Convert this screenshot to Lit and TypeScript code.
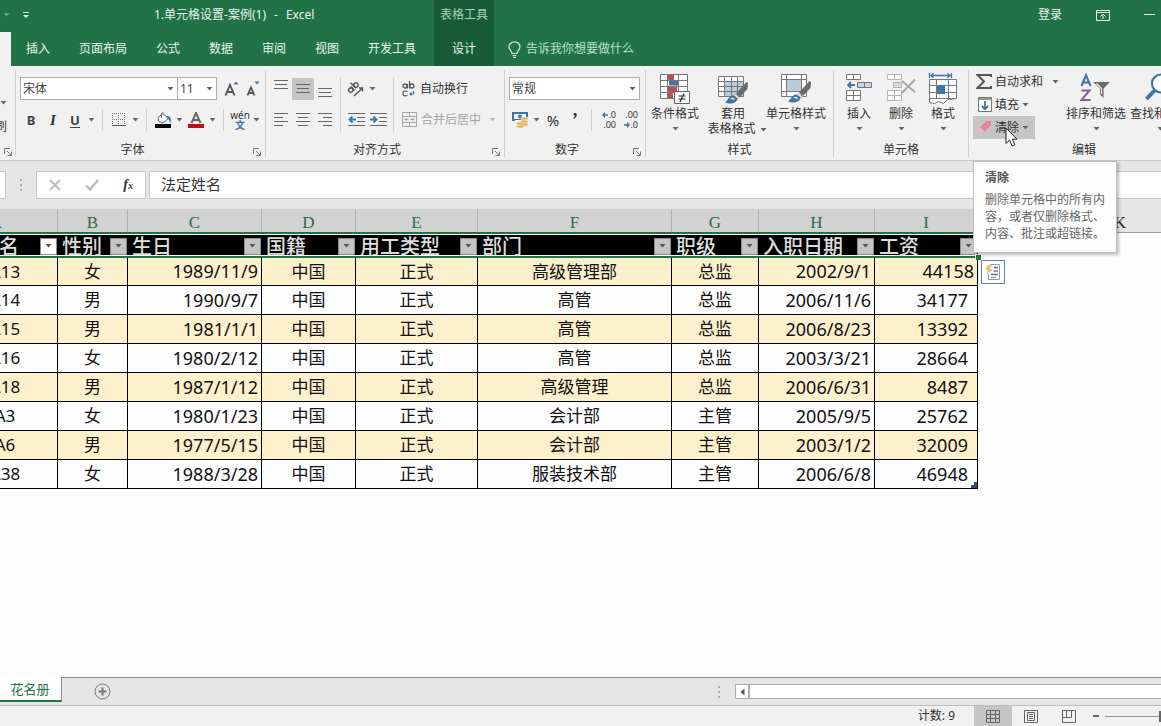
import { LitElement, html, css, svg, nothing, TemplateResult } from "lit";
import { customElement, property, state } from "lit/decorators.js";
import { classMap } from "lit/directives/class-map.js";

const UI_FONT = css`"Noto Sans", "Noto Sans CJK SC", sans-serif`;

const icon = (w: number, h: number, body: unknown) => html`<svg
  width=${w}
  height=${h}
  viewBox="0 0 ${w} ${h}"
  fill="none"
  stroke-width="1"
  aria-hidden="true"
>${body}</svg>`;

const caret = (color = "#666") =>
  icon(7, 4, svg`<path d="M0.5 0h6L3.5 3.5z" fill=${color} />`);

const lines = (rows: Array<[number, number, number]>, h = 16) =>
  icon(16, h, svg`<path stroke="#666" d=${rows.map(([x, y, w]) => `M${x} ${y}.5h${w}`).join("")} />`);

const brush = (x: number, y: number) => svg`<g transform="translate(${x} ${y})">
  <path d="M21.500 0L23 1l-.5 6L15 15l-4-3.500z" fill="#6b6b6b" />
  <path d="M10.500 12l4 3.500-1.500 1.500-4-3.500z" fill="#e8e8e8" stroke="#8a8a8a" stroke-width=".5" />
  <path d="M8.500 13.500c-4-.5-5 4-8.500 7 5 2 12 1 12.500-4z" fill="#3f74a3" />
  <path d="M6 17c1-1 3-.5 3 1" stroke="#dbe9f4" stroke-width="1.500" /></g>`;

const icons = {
  qat: icon(8, 8, svg`<path d="M1 1.500h6" stroke="#e4f2ea" /><path d="M1 4h6L4 7z" fill="#e4f2ea" />`),
  ribbonOptions: icon(14, 12, svg`<path stroke="#e4f2ea" d="M.5 1.500h13v10h-13zM.5 3.500h13M7 10V5M4.500 7.500L7 5l2.500 2.500" />`),
  minimize: icon(11, 2, svg`<path stroke="#e4f2ea" d="M0 .5h11" />`),
  bulb: icon(13, 17, svg`<path stroke="#d5eadd" stroke-width="1.200" d="M4 12.500C4 10 1 9 1 5.800a5.500 5 0 0 1 11 0C12 9 9 10 9 12.500zM4.500 14.500h4M5 16.300h3" />`),
  launcher: icon(8, 8, svg`<path stroke="#777" d="M.5 6V.5H6M3 3l4 4M7.500 3.500v4h-4" />`),
  grow: icon(15, 16, svg`<path stroke="#555" stroke-width="1.900" d="M1.500 14.500L6 4L10.500 14.500M3 11h6" /><path fill="#3f74a3" d="M9.500 3.500L12 .5l2.500 3z" />`),
  shrink: icon(14, 16, svg`<path stroke="#555" stroke-width="1.800" d="M1.500 14.500L5 6.500L8.500 14.500M2.700 12h4.600" /><path fill="#3f74a3" d="M8.500 .5h5L11 3.500z" />`),
  borders: icon(14, 14, svg`<path stroke="#777" stroke-dasharray="1 1" d="M0 .5h13M0 6.500h13M.5 0v13M6.500 0v13M12.500 0v13" /><path stroke="#555" d="M0 12.500h14" />`),
  bucket: icon(17, 16, svg`<path stroke="#666" d="M3 5.500L8 1.500l5.500 5L8 11 3.500 9zM6.500 6V1.500Q7 .3 8 1" fill="#fff" /><path fill="#3f74a3" d="M12 4c3 0 5 2 3.500 7-1-2-1-3.500-3.500-5z" /><path fill="#000" d="M0 12h16v4H0z" />`),
  fontColor: icon(16, 16, svg`<path stroke="#666" stroke-width="2" d="M3.500 11L8 1L12.500 11M5.300 8h5.500" /><path fill="#c00d16" d="M0 12h16v4H0z" />`),
  orient: icon(18, 16, svg`<g stroke="#555" stroke-width="1.400"><g transform="rotate(-45 7 8)"><circle cx="4" cy="6.500" r="2.200" /><path d="M6.500 4v5.200M9 1v8" /><circle cx="11.200" cy="6.500" r="2.200" /></g><path d="M7 15L15.500 7M12 7h3.500v3.500" /></g>`),
  outdent: icon(17, 13, svg`<path stroke="#666" d="M0 .5h17M9 4.500h8M9 8.500h8M0 12.500h17" /><path stroke="#3f74a3" stroke-width="1.800" d="M8 6.500H1.500M4.500 3.500l-3 3 3 3" />`),
  indent: icon(17, 13, svg`<path stroke="#666" d="M0 .5h17M9 4.500h8M9 8.500h8M0 12.500h17" /><path stroke="#3f74a3" stroke-width="1.800" d="M0 6.500h6.500M3.500 3.500l3 3-3 3" />`),
  wrap: icon(14, 16, svg`<g stroke="#555" stroke-width="1.300"><circle cx="3" cy="5" r="2" /><path d="M5.300 3v4.500M7.500 0v7.500M5.500 10.500Q1 9 1 12.500t4.500 2" /><circle cx="9.800" cy="5" r="2" /></g><path stroke="#3f74a3" stroke-width="1.200" d="M11.500 10v3H8M9.500 11.500L8 13l1.500 1.500" />`),
  merge: icon(15, 15, svg`<path stroke="#a5a5a5" d="M.5 .5h14v14H.5zM.5 4.500h14M.5 10.500h14M7.500 .5v4M7.500 10.500v4M3 7.500h3.500M12 7.500H8.500M4.500 6L3 7.500 4.500 9M10.500 6l1.500 1.500L10.500 9" />`),
  currency: icon(17, 16, svg`<path fill="#3f74a3" d="M0 0h16v9H0z" /><path fill="#f5f5f5" d="M2 2h12v5H2z" /><circle cx="8" cy="4.500" r="2" fill="#3f74a3" /><path fill="#f1f1f1" d="M9 5h8v11H3V8h6z" /><g fill="#e3b65c"><ellipse cx="12.500" cy="6.500" rx="3.500" ry="1.300" /><ellipse cx="12.500" cy="9.500" rx="3.500" ry="1.300" /><ellipse cx="12.500" cy="12.500" rx="3.500" ry="1.300" /><ellipse cx="7.500" cy="11.500" rx="3" ry="1.200" /><ellipse cx="8" cy="14.500" rx="3.500" ry="1.300" /></g>`),
  arrowLeft: icon(6, 6, svg`<path stroke="#3f74a3" stroke-width="1.300" d="M6 3H1M3 .7L.8 3 3 5.300" />`),
  arrowRight: icon(6, 6, svg`<path stroke="#3f74a3" stroke-width="1.300" d="M0 3h5M3 .7L5.200 3 3 5.300" />`),
  conditional: icon(32, 32, svg`<path fill="#fff" d="M1.500 1.500h27v24h-27z" /><path fill="#c0504d" d="M9 2h6v5H9zM9 13h9v6H9zM9 19h5v6H9z" /><path fill="#3f74a3" d="M10 7.500h10v5H10z" /><path stroke="#777" d="M1.500 1.500h27v24h-27zM1.500 7.500h27M1.500 13.500h27M1.500 19.500h27M8.500 1.500v24M19.500 1.500v24" /><path fill="#fff" stroke="#666" d="M15.500 18.500h15v12h-15z" /><path stroke="#333" stroke-width="1.200" d="M19.500 23h7M19.500 26h7M25 20.500L21 29" />`),
  tableFormat: icon(32, 32, svg`<path fill="#fff" d="M1.500 3.500h25v20h-25z" /><path fill="#b9cbdc" d="M8 9h18v14H8z" /><path stroke="#777" d="M1.500 3.500h25v20h-25zM1.500 8.500h25M1.500 13.500h25M1.500 18.500h25M7.500 3.500v20M14.500 3.500v20M20.500 3.500v20" />${brush(8, 9)}`),
  cellStyle: icon(32, 32, svg`<path fill="#fff" d="M1.500 1.500h25v22h-25z" /><path fill="#b9cbdc" d="M7 7h14v11H7z" /><path stroke="#777" d="M1.500 1.500h25v22h-25zM1.500 6.500h25M1.500 18.500h25M6.500 1.500v22M21.500 1.500v22" />${brush(8, 8)}`),
  insert: icon(28, 32, svg`<path fill="#fff" stroke="#777" d="M1.500 1.500h14v5h-14zM8.500 1.500v5M1.500 17.500h14v10h-14zM1.500 22.500h14M8.500 17.500v10" /><path fill="#c3d3e2" stroke="#777" d="M12.500 9.500h14v5h-14zM19.500 9.500v5" /><path stroke="#3f74a3" stroke-width="1.800" d="M10 12H3M6 9l-3 3 3 3" />`),
  remove: icon(32, 32, svg`<path fill="#fff" stroke="#b5b5b5" d="M2.500 1.500h14v5h-14zM9.500 1.500v5M2.500 17.500h14v10h-14zM2.500 22.500h14M9.500 17.500v10" /><path fill="#d8d8d8" stroke="#b5b5b5" d="M8.500 9.500h8v5h-8z" /><path stroke="#a8a8a8" stroke-width="2" d="M17 8l13 11M30 6.500L17 20" />`),
  format: icon(30, 32, svg`<path stroke="#3f74a3" stroke-width="1.300" d="M1.500 0v5M23.500 0v5M3 2.500h19M5.500 .3L3 2.500l2.500 2.200M19.500 .3L22 2.500l-2.500 2.200" /><path fill="#fff" stroke="#777" d="M1.500 6.500h27v19l-9 1-4 4-5-2-4 2-5-1z" /><path stroke="#777" d="M1.500 12.500h27M1.500 19.500h27M1.500 25.500h27M8.500 6.500v19M20.500 6.500v19" /><path fill="#3f74a3" d="M9 12h8v9H9z" />`),
  sum: icon(16, 15, svg`<path stroke="#555" stroke-width="2" d="M15 3V1H1.500L8 7.500 1.500 14H15v-2" />`),
  fill: icon(14, 15, svg`<path fill="#fff" stroke="#777" d="M.5 .5h13v14H.5z" /><path fill="#999" d="M1 1h12v2H1z" /><path stroke="#3f74a3" stroke-width="1.800" d="M7 4v8M3.800 9L7 12.200 10.200 9" />`),
  eraser: icon(14, 13, svg`<path fill="#e6859b" d="M8.500 0h4.500v4.500l-6.500 6-4.500-4.500z" /><path fill="#f3b6c2" d="M1.800 6.500l4.200 4.300L4.500 12H1.500L0 10V8z" />`),
  sort: icon(32, 32, svg`<path stroke="#3f74a3" stroke-width="2" d="M1.500 13L6 2l4.500 11M3.200 9.500h5.800" /><path stroke="#8a5aa0" stroke-width="2" d="M1.500 17.500h8L1.500 27h9" /><path fill="#6b6b6b" d="M13 9h17l-6.500 6.500V25L20 21.500v-6z" /><path stroke="#eee" stroke-width="1.200" d="M16.500 10.500l5 5v5.500" />`),
  find: icon(32, 32, svg`<circle cx="17" cy="10.500" r="9" stroke="#3f74a3" stroke-width="2.200" fill="#fff" /><path stroke="#3f74a3" stroke-width="4" d="M10.500 17.500L2.500 26" />`),
  cross: icon(12, 12, svg`<path stroke="#bbb" stroke-width="1.800" d="M1 1l10 10M11 1L1 11" />`),
  check: icon(14, 12, svg`<path stroke="#bbb" stroke-width="2.400" d="M1 6.500l4 4L13 1" />`),
  dots: icon(3, 12, svg`<path fill="#aaa" d="M0 0h2v2H0zM0 5h2v2H0zM0 10h2v2H0z" />`),
  plus: icon(17, 17, svg`<circle cx="8.500" cy="8.500" r="7.500" stroke="#777" /><path stroke="#777" stroke-width="2" d="M8.500 4.500v8M4.500 8.500h8" />`),
  scrollLeft: icon(5, 8, svg`<path fill="#555" d="M4.500 .5v7L.5 4z" />`),
  normalView: icon(14, 13, svg`<path stroke="#666" d="M.5 .5h13v12H.5zM.5 4.500h13M.5 8.500h13M4.500 .5v12M9.500 .5v12" />`),
  pageView: icon(14, 13, svg`<path stroke="#666" d="M.5 .5h13v12H.5zM3.500 2.500h7v8h-7zM5 4.500h4M5 6.500h4M5 8.500h4" />`),
  breakView: icon(14, 13, svg`<path stroke="#666" d="M.5 .5h13v12H.5zM4.500 .5v7M9.500 .5v7M.5 7.500h9" />`),
  tag: icon(18, 18, svg`<path fill="#fff" stroke="#999" d="M6.500 3.500V1.500h9v15h-11V11" /><path fill="#e8c07e" d="M4 2h4L6 6h3l-7 6 2-5H1z" /><path stroke="#3f74a3" stroke-width="1.500" d="M10 4.500h4M7 11.500h7" /><path stroke="#a0606a" stroke-width="1.500" d="M9.500 8h4.500" /><path stroke="#888" d="M7 14.500h5" />`),
  cursor: icon(13, 20, svg`<path fill="#fff" stroke="#222" d="M1 1v15.500l3.600-3.400L7.200 19l2.600-1.200-2.500-5.600H12z" />`),
};

/** Drop-down box with a flat frame and a small caret. */
@customElement("xl-combo")
export class XlCombo extends LitElement {
  @property() label = "";
  @property({ type: Array }) options: string[] = [];
  static styles = css`
    :host { display: grid; background: #fff; border: 1px solid #ababab; height: 21px; }
    select, .caret { grid-area: 1 / 1; }
    select {
      appearance: none; border: 0; background: none; width: 100%; min-width: 0; padding: 0 2px;
      font: 12px/20px ${UI_FONT}; color: #444; outline: none; border-radius: 0;
    }
    .caret { justify-self: end; align-self: center; display: flex; padding-right: 3px; pointer-events: none; }
  `;
  render() {
    return html`<select aria-label=${this.label}>${this.options.map((o) => html`<option>${o}</option>`)}</select>
      <span class="caret">${caret()}</span>`;
  }
}

/** Titled section of the ribbon. */
@customElement("xl-group")
export class XlGroup extends LitElement {
  @property() label = "";
  @property({ type: Boolean }) launcher = false;
  static styles = css`
    :host { display: flex; flex-direction: column; flex: none; box-sizing: border-box; margin: 4px 0 3px; border-right: 1px solid #d0d0d0; }
    .body { flex: 1; display: flex; padding: 0 3px 0 4px; }
    .foot { display: flex; align-items: center; height: 14px; font: 12px/14px ${UI_FONT}; color: #333; }
    .name { flex: 1; text-align: center; }
    button { border: 0; background: none; padding: 4px 4px 0; display: flex; }
  `;
  render() {
    return html`<div class="body"><slot></slot></div>
      <div class="foot">
        <span class="name">${this.label}</span>
        ${this.launcher ? html`<button aria-label="更多">${icons.launcher}</button>` : nothing}
      </div>`;
  }
}

interface Column { letter: string; title: string; cls: string }

const COLUMNS: Column[] = [
  { letter: "A", title: "法定姓名", cls: "a" },
  { letter: "B", title: "性别", cls: "b" },
  { letter: "C", title: "生日", cls: "c" },
  { letter: "D", title: "国籍", cls: "d" },
  { letter: "E", title: "用工类型", cls: "e" },
  { letter: "F", title: "部门", cls: "f" },
  { letter: "G", title: "职级", cls: "g" },
  { letter: "H", title: "入职日期", cls: "h" },
  { letter: "I", title: "工资", cls: "i" },
];

const ROWS: string[][] = [
  ["A13", "女", "1989/11/9", "中国", "正式", "高级管理部", "总监", "2002/9/1", "44158"],
  ["A14", "男", "1990/9/7", "中国", "正式", "高管", "总监", "2006/11/6", "34177"],
  ["A15", "男", "1981/1/1", "中国", "正式", "高管", "总监", "2006/8/23", "13392"],
  ["A16", "女", "1980/2/12", "中国", "正式", "高管", "总监", "2003/3/21", "28664"],
  ["A18", "男", "1987/1/12", "中国", "正式", "高级管理", "总监", "2006/6/31", "8487"],
  ["A3", "女", "1980/1/23", "中国", "正式", "会计部", "主管", "2005/9/5", "25762"],
  ["A6", "男", "1977/5/15", "中国", "正式", "会计部", "主管", "2003/1/2", "32009"],
  ["A38", "女", "1988/3/28", "中国", "正式", "服装技术部", "主管", "2006/6/8", "46948"],
];

/** Worksheet: column letters, the staff table and its selection marks. */
@customElement("xl-sheet")
export class XlSheet extends LitElement {
  static styles = css`
    :host { display: block; overflow: hidden; background: #fdfdfd; font: 17px/28px ${UI_FONT}; color: #111; }
    .canvas { margin-left: -65px; }
    .a { width: 123px; } .b { width: 70px; } .c { width: 134px; } .d { width: 94px; } .e { width: 122px; }
    .f { width: 194px; } .g { width: 87px; } .h { width: 116px; } .i { width: 103px; } .j { width: 95px; }
    .letters { display: flex; height: 23px; background: #e6e6e6; border-bottom: 1px solid #9b9b9b; }
    .letters span {
      flex: none; box-sizing: border-box; border-right: 1px solid #b1b1b1; text-align: center;
      font: 17px/27px "Liberation Serif", serif; color: #222;
    }
    .letters .on { background: #d2d2d2; color: #2b6b4b; }
    .frame { position: relative; width: 1043px; margin-top: -1px; }
    table { table-layout: fixed; width: 1043px; border-spacing: 0; }
    th {
      box-sizing: border-box; height: 26px; padding: 0; background: #000; color: #dcdcdc; font-size: 20px; line-height: 20px; font-weight: 500;
      border-top: 2px solid #217346; border-bottom: 2px solid #217346;
    }
    .title { display: flex; align-items: center; height: 20px; border: solid #fff; border-width: 1px 0; text-align: left; }
    .title span { flex: 1; padding: 3px 0 0 4px; white-space: nowrap; }
    .filter {
      display: flex; align-items: center; justify-content: center; flex: none; width: 17px; height: 17px; padding: 0; margin-right: 1px; margin-top: 2px;
      border: 1px solid #8c8c8c; background: #c4c4c4;
    }
    .filter.current { background: #fff; }
    td { box-sizing: border-box; height: 29px; padding: 0; text-align: center; border: solid #000; border-width: 0 1px 1px 0; }
    tbody tr:first-child td { height: 28px; line-height: 27px; }
    tbody tr:nth-child(odd) td { background: #fdf0cd; }
    td.a { padding-left: 18px; }
    td.c, td.h, td.i { text-align: right; padding-right: 3px; font-size: 18px; }
    td.i { padding-right: 9px; }
    tbody tr:first-child td.i { padding-right: 3px; }
    .handle { position: absolute; right: -3px; top: 22px; width: 5px; height: 5px; background: #217346; border: 1px solid #fff; border-width: 1px 0 0 1px; }
    .corner { position: absolute; right: 1px; bottom: 1px; display: flex; }
    .tag { position: absolute; left: 100%; top: 28px; margin-left: 3px; width: 24px; height: 24px; padding: 0; display: grid; place-items: center; background: #fff; border: 1px solid #5b8795; }
  `;
  render() {
    return html`<div class="canvas">
      <div class="letters">
        ${COLUMNS.map((c) => html`<span class="on ${c.cls}">${c.letter}</span>`)}
        <span class="j"></span><span class="j">K</span>
      </div>
      <div class="frame">
        <table>
          <thead><tr>
            ${COLUMNS.map((c, i) => html`<th class=${c.cls} scope="col"><div class="title"><span>${c.title}</span>
              <button class=${classMap({ filter: true, current: i === 0 })} aria-label="筛选">${caret("#555")}</button></div></th>`)}
          </tr></thead>
          <tbody>
            ${ROWS.map((r) => html`<tr>${r.map((v, i) => html`<td class=${COLUMNS[i].cls}>${v}</td>`)}</tr>`)}
          </tbody>
        </table>
        <span class="handle"></span>
        <span class="corner">${icon(6, 6, svg`<path fill="#3b4a7a" d="M3 0h3v6H0V3h3z" />`)}</span>
        <button class="tag" aria-label="快速分析">${icons.tag}</button>
      </div>
    </div>`;
  }
}

@customElement("app-root")
export class AppRoot extends LitElement {
  @state() private formula = "法定姓名";

  static styles = css`
    :host { display: flex; flex-direction: column; height: 100vh; overflow: hidden; position: relative; font: 12px/16px ${UI_FONT}; color: #333; background: #e6e6e6; }
    button, input { font: inherit; color: inherit; border: 0; background: none; padding: 0; margin: 0; border-radius: 0; outline: none; }
    svg { display: block; flex: none; }
    .row, .tools { display: flex; align-items: center; }

    .head { flex: none; display: grid; grid-template: 32px 34px / 434px 60px 1fr; background: #217346; color: #e9f5ee; }
    .caption { display: flex; align-items: center; padding: 0 0 2px 3px; }
    .caption .dim { opacity: .35; }
    .caption .qat { margin-left: 12px; }
    .caption .name { display: flex; gap: 8px; margin-left: 124px; }
    .context { grid-area: 1 / 2 / 3 / 3; background: #185c37; display: grid; grid-template-rows: 32px 34px; text-align: center; align-items: center; }
    .context span { color: #a9d2ba; padding-bottom: 2px; }
    .window { grid-area: 1 / 3; display: flex; justify-content: flex-end; align-items: center; gap: 34px; padding: 0 6px 2px 0; }
    .tabs { grid-area: 2 / 1; display: flex; gap: 1px; }
    .tabs button { padding: 0 14px; }
    .tabs .home { width: 11px; padding: 0; background: #f1f1f1; }
    .tell { grid-area: 2 / 3; display: flex; align-items: center; gap: 5px; padding-left: 14px; color: #bfe0cc; }
    .tell input { width: 160px; }
    .tell input::placeholder { color: #bfe0cc; opacity: 1; }

    .ribbon { flex: none; display: flex; height: 94px; background: #f1f1f1; border-bottom: 1px solid #c8c8c8; overflow: hidden; white-space: nowrap; }
    .w-clip { width: 16px; } .w-font { width: 250px; } .w-align { width: 239px; } .w-number { width: 141px; }
    .w-style { width: 188px; } .w-cells { width: 135px; } .w-edit { width: 230px; border-right: 0; }
    .clip { width: 10px; overflow: hidden; display: flex; flex: none; flex-direction: column; align-items: flex-end; gap: 14px; padding-top: 31px; margin-left: -4px; }
    .clip span { margin-right: 3px; }
    .stack { display: flex; flex-direction: column; gap: 8px; padding-top: 7px; }
    .tools { height: 23px; }
    .font { width: 156px; } .size { width: 38px; margin-left: -1px; margin-right: 3px; } .format { width: 129px; }
    .tool { width: 22px; height: 22px; display: flex; align-items: center; justify-content: center; flex: none; }
    .tool.on { background: #c5c5c5; }
    .drop { width: 11px; height: 22px; display: flex; align-items: center; justify-content: center; flex: none; }
    .rule { width: 1px; height: 22px; background: #d0d0d0; margin: 0 5px; flex: none; }
    .tall { width: 1px; height: 55px; background: #d0d0d0; margin: 7px 4px 0; flex: none; }
    .letter { font: 700 13px/20px ${UI_FONT}; color: #444; }
    .italic { font: italic 700 15px/20px "Liberation Serif", serif; }
    .under { text-decoration: underline; text-underline-offset: 2px; }
    .pinyin { flex-direction: column; font-size: 10px; line-height: 10px; }
    .pinyin b { color: #3f74a3; line-height: 10px; }
    .pinyin span { line-height: 10px; }
    .mark { font: 700 18px/20px "Liberation Serif", serif; }
    .percent { font-size: 15px; }
    .decimals { flex-direction: column; align-items: flex-end; font: 9px/10px "Noto Sans", sans-serif; color: #333; padding-right: 3px; box-sizing: border-box; }
    .decimals span { display: flex; align-items: center; height: 10px; }
    .text { display: flex; align-items: center; gap: 4px; height: 23px; }
    .wide { padding-left: 4px; }
    .muted { color: #a5a5a5; }
    .muted .drop { margin-left: 2px; }
    .big { display: flex; flex-direction: column; align-items: center; padding-top: 3px; flex: none; line-height: 15px; }
    .big svg + .lab { margin-top: 1px; }
    .big .arrow { margin-top: 6px; }
    .lab .inline { display: inline-flex; vertical-align: middle; margin-left: 4px; margin-right: -8px; }
    .w56 { width: 56px; } .w60 { width: 60px; } .w66 { width: 66px; } .w42 { width: 42px; } .w64 { width: 64px; }
    .styles { display: flex; margin-left: -3px; }
    .cells { display: flex; }
    .edits { width: 91px; display: flex; flex: none; flex-direction: column; align-items: flex-start; }
    .edits button { display: flex; align-items: center; gap: 3px; height: 23px; padding: 0 6px 0 5px; }
    .edits .sum { padding-left: 3px; }
    .edits .sum svg:last-child { margin-left: 6px; }
    .edits .on { background: #c5c5c5; }

    .bar { flex: none; display: flex; height: 28px; padding: 10px 0; }
    .bar > * { box-sizing: border-box; border: 1px solid #c8c8c8; background: #fff; }
    .bar .name { width: 6px; border-left: 0; }
    .bar .grip { border: 0; background: none; width: 30px; display: grid; place-items: center; }
    .bar .keys { width: 110px; display: flex; align-items: center; justify-content: space-between; padding: 0 12px; margin-right: 3px; }
    .fx { font: italic 700 14px/16px "Liberation Serif", serif; }
    .fx small { font-size: 10px; }
    .bar .formula { flex: 1; min-width: 0; border-right: 0; font-size: 15px; padding: 0 11px 2px; color: #333; }

    xl-sheet { flex: 1; min-height: 0; }

    .foot { flex: none; display: flex; height: 27px; border-top: 1px solid #8e8e8e; border-bottom: 1px solid #bdbdbd; }
    .sheet { box-sizing: border-box; width: 62px; height: 25px; margin-top: -1px; padding-right: 1px; background: #fff; border-right: 1px solid #8e8e8e; border-bottom: 2px solid #217346; color: #217346; font-size: 13px; }
    .add { margin-left: 32px; }
    .foot .grip { margin-left: auto; margin-right: 14px; align-self: center; }
    .scroll { display: flex; align-self: center; width: 425px; height: 13px; border: 1px solid #ababab; border-right: 0; background: #fff; }
    .scroll button { width: 14px; display: grid; place-items: center; border-right: 2px solid #ababab; }
    .status { flex: none; display: flex; align-items: center; justify-content: flex-end; height: 20px; background: #f1f1f1; overflow: hidden; }
    .status .count { margin-right: 19px; }
    .view { width: 38px; height: 20px; display: grid; place-items: center; }
    .view.on { background: #c5c5c5; }
    .minus { width: 6px; height: 2px; background: #666; margin: 0 6px 0 5px; }
    .zoom { width: 56px; overflow: hidden; display: flex; }
    .zoom input { appearance: none; flex: none; width: 114px; height: 14px; background: linear-gradient(#999, #999) center / 100% 1px no-repeat; }
    .zoom input::-webkit-slider-thumb { appearance: none; width: 6px; height: 11px; background: #666; }

    .tip { position: absolute; left: 973px; top: 161px; width: 121px; padding: 7px 10px 10px 11px; background: #fdfdfd; border: 1px solid #c0c0c0; box-shadow: 2px 2px 3px rgba(0, 0, 0, .25); color: #666; line-height: 17px; }
    .tip b { display: block; color: #555; margin-bottom: 5px; }
    .tip p { margin: 0; }
    .pointer { position: absolute; left: 1005px; top: 127px; pointer-events: none; }
  `;

  private tool(body: unknown, label: string, cls = "") {
    return html`<button class="tool ${cls}" aria-label=${label}>${body}</button>`;
  }
  private drop(color?: string) {
    return html`<button class="drop" aria-label="展开">${caret(color)}</button>`;
  }
  private big(art: TemplateResult, label: unknown, cls: string, arrow = true) {
    return html`<button class="big ${cls}">${art}<span class="lab">${label}</span>${arrow ? html`<span class="arrow">${caret()}</span>` : nothing}</button>`;
  }

  private renderHead() {
    return html`<header class="head">
      <div class="caption">
        <span class="dim">${caret("#fff")}</span><span class="qat">${icons.qat}</span>
        <span class="name"><span>1.单元格设置-案例(1)</span><span>-</span><span>Excel</span></span>
      </div>
      <div class="context"><span>表格工具</span><button>设计</button></div>
      <div class="window"><button>登录</button><button aria-label="功能区显示选项">${icons.ribbonOptions}</button><button aria-label="最小化">${icons.minimize}</button></div>
      <nav class="tabs">
        <button class="home" aria-label="开始"></button>
        ${["插入", "页面布局", "公式", "数据", "审阅", "视图", "开发工具"].map((t) => html`<button>${t}</button>`)}
      </nav>
      <label class="tell">${icons.bulb}<input placeholder="告诉我你想要做什么" aria-label="告诉我你想要做什么" /></label>
    </header>`;
  }

  private renderRibbon() {
    return html`<section class="ribbon">
      <xl-group class="w-clip" launcher><div class="clip"><span>${caret()}</span><span>格式刷</span></div></xl-group>

      <xl-group class="w-font" label="字体" launcher>
        <div class="stack">
          <div class="tools">
            <xl-combo class="font" label="字体" .options=${["宋体"]}></xl-combo>
            <xl-combo class="size" label="字号" .options=${["11"]}></xl-combo>
            ${this.tool(icons.grow, "增大字号")}${this.tool(icons.shrink, "减小字号")}
          </div>
          <div class="tools">
            ${this.tool("B", "加粗", "letter")}${this.tool("I", "倾斜", "italic")}${this.tool(html`<span class="under">U</span>`, "下划线", "letter")}${this.drop()}
            <i class="rule"></i>${this.tool(icons.borders, "边框")}${this.drop()}
            <i class="rule"></i>${this.tool(icons.bucket, "填充颜色")}${this.drop()}${this.tool(icons.fontColor, "字体颜色")}${this.drop()}
            <i class="rule"></i>${this.tool(html`<span>wén</span><b>文</b>`, "拼音", "pinyin")}${this.drop()}
          </div>
        </div>
      </xl-group>

      <xl-group class="w-align" label="对齐方式" launcher>
        <div class="stack">
          <div class="tools">
            ${this.tool(lines([[1, 0, 14], [2, 4, 12], [1, 8, 14]], 18), "顶端对齐")}
            ${this.tool(lines([[1, 3, 14], [2, 7, 12], [1, 11, 14]]), "垂直居中", "on")}
            ${this.tool(lines([[1, 8, 14], [2, 12, 12], [1, 16, 14]], 18), "底端对齐")}
          </div>
          <div class="tools">
            ${this.tool(lines([[1, 1, 14], [1, 5, 9], [1, 9, 14], [1, 13, 9]]), "左对齐")}
            ${this.tool(lines([[1, 1, 14], [3, 5, 10], [1, 9, 14], [3, 13, 10]]), "居中")}
            ${this.tool(lines([[1, 1, 14], [6, 5, 9], [1, 9, 14], [6, 13, 9]]), "右对齐")}
          </div>
        </div>
        <i class="tall"></i>
        <div class="stack">
          <div class="tools">${this.tool(icons.orient, "方向")}${this.drop()}</div>
          <div class="tools">${this.tool(icons.outdent, "减少缩进")}${this.tool(icons.indent, "增加缩进")}</div>
        </div>
        <i class="tall"></i>
        <div class="stack wide">
          <button class="text">${icons.wrap}自动换行</button>
          <button class="text muted">${icons.merge}合并后居中<span class="drop">${caret("#bbb")}</span></button>
        </div>
      </xl-group>

      <xl-group class="w-number" label="数字" launcher>
        <div class="stack">
          <div class="tools"><xl-combo class="format" label="数字格式" .options=${["常规"]}></xl-combo></div>
          <div class="tools">
            ${this.tool(icons.currency, "会计数字格式")}${this.drop()}${this.tool("%", "百分比", "percent")}${this.tool("’", "千位分隔", "mark")}
            <i class="rule"></i>
            ${this.tool(html`<span>${icons.arrowLeft}.0</span><span>.00</span>`, "增加小数位数", "decimals")}
            ${this.tool(html`<span>.00</span><span>${icons.arrowRight}.0</span>`, "减少小数位数", "decimals")}
          </div>
        </div>
      </xl-group>

      <xl-group class="w-style" label="样式">
        <div class="styles">
          ${this.big(icons.conditional, "条件格式", "w56")}
          ${this.big(icons.tableFormat, html`套用<br />表格格式<span class="inline">${caret()}</span>`, "w60", false)}
          ${this.big(icons.cellStyle, "单元格样式", "w66")}
        </div>
      </xl-group>

      <xl-group class="w-cells" label="单元格">
        <div class="cells">
          ${this.big(icons.insert, "插入", "w42")}${this.big(icons.remove, "删除", "w42")}${this.big(icons.format, "格式", "w42")}
        </div>
      </xl-group>

      <xl-group class="w-edit" label="编辑">
        <div class="edits">
          <button class="sum">${icons.sum}自动求和 ${caret()}</button>
          <button>${icons.fill}填充${caret()}</button>
          <button class="on">${icons.eraser}清除${caret()}</button>
        </div>
        ${this.big(icons.sort, "排序和筛选", "w64")}
        ${this.big(icons.find, "查找和选择", "w64")}
      </xl-group>
    </section>`;
  }

  render() {
    return html`
      ${this.renderHead()} ${this.renderRibbon()}
      <section class="bar">
        <span class="name"></span>
        <span class="grip">${icons.dots}</span>
        <div class="keys">
          <button aria-label="取消">${icons.cross}</button><button aria-label="输入">${icons.check}</button><button class="fx" aria-label="插入函数">f<small>x</small></button>
        </div>
        <input class="formula" aria-label="编辑栏" .value=${this.formula} @input=${(e: Event) => (this.formula = (e.target as HTMLInputElement).value)} />
      </section>
      <xl-sheet></xl-sheet>
      <section class="foot">
        <button class="sheet">花名册</button>
        <button class="add" aria-label="新工作表">${icons.plus}</button>
        <span class="grip">${icons.dots}</span>
        <div class="scroll"><button aria-label="向左滚动">${icons.scrollLeft}</button></div>
      </section>
      <footer class="status">
        <span class="count">计数: 9</span>
        <button class="view on" aria-label="普通">${icons.normalView}</button>
        <button class="view" aria-label="页面布局">${icons.pageView}</button>
        <button class="view" aria-label="分页预览">${icons.breakView}</button>
        <button class="minus" aria-label="缩小"></button>
        <div class="zoom"><input type="range" min="0" max="100" value="50" aria-label="缩放" /></div>
      </footer>
      <aside class="tip" role="tooltip"><b>清除</b><p>删除单元格中的所有内容，或者仅删除格式、内容、批注或超链接。</p></aside>
      <span class="pointer">${icons.cursor}</span>
    `;
  }
}
